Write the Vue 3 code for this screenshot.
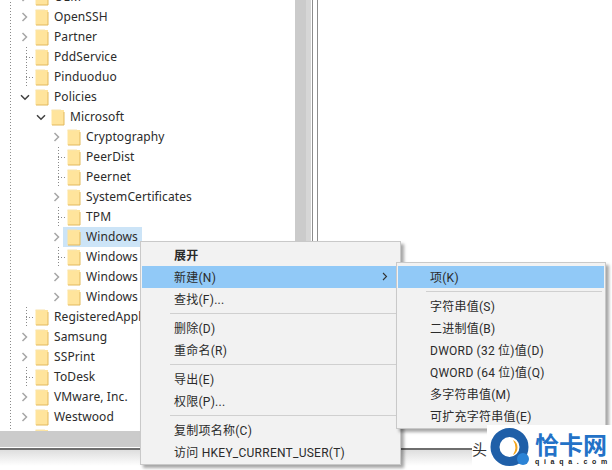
<script setup>
const rows = [
  { id: 0, name: 'OEM', level: 0, mark: 'closed' },
  { id: 1, name: 'OpenSSH', level: 0, mark: 'closed' },
  { id: 2, name: 'Partner', level: 0, mark: 'closed' },
  { id: 3, name: 'PddService', level: 0, mark: 'none' },
  { id: 4, name: 'Pinduoduo', level: 0, mark: 'none' },
  { id: 5, name: 'Policies', level: 0, mark: 'open' },
  { id: 6, name: 'Microsoft', level: 1, mark: 'open' },
  { id: 7, name: 'Cryptography', level: 2, mark: 'closed' },
  { id: 8, name: 'PeerDist', level: 2, mark: 'none' },
  { id: 9, name: 'Peernet', level: 2, mark: 'none' },
  { id: 10, name: 'SystemCertificates', level: 2, mark: 'closed' },
  { id: 11, name: 'TPM', level: 2, mark: 'none' },
  { id: 12, name: 'Windows', level: 2, mark: 'closed', selected: true },
  { id: 13, name: 'Windows Defender', level: 2, mark: 'none' },
  { id: 14, name: 'Windows NT', level: 2, mark: 'closed' },
  { id: 15, name: 'Windows Search', level: 2, mark: 'closed' },
  { id: 16, name: 'RegisteredApplications', level: 0, mark: 'none' },
  { id: 17, name: 'Samsung', level: 0, mark: 'closed' },
  { id: 18, name: 'SSPrint', level: 0, mark: 'closed' },
  { id: 19, name: 'ToDesk', level: 0, mark: 'none' },
  { id: 20, name: 'VMware, Inc.', level: 0, mark: 'closed' },
  { id: 21, name: 'Westwood', level: 0, mark: 'closed' },
  { id: 22, name: '', level: 0, mark: 'closed' }
]
const mainMenu = [
  [{ t: '展开', bold: true }, { t: '新建(N)', active: true, arrow: true }, { t: '查找(F)...' }],
  [{ t: '删除(D)' }, { t: '重命名(R)' }],
  [{ t: '导出(E)' }, { t: '权限(P)...' }],
  [{ t: '复制项名称(C)' }, { t: '访问 HKEY_CURRENT_USER(T)' }]
]
const subMenu = [
  [{ t: '项(K)', active: true }],
  [{ t: '字符串值(S)' }, { t: '二进制值(B)' }, { t: 'DWORD (32 位)值(D)' }, { t: 'QWORD (64 位)值(Q)' }, { t: '多字符串值(M)' }, { t: '可扩充字符串值(E)' }]
]
</script>

<template>
  <div class="screen">
    <div class="panes">
      <div class="tree">
        <div class="tree-list">
          <div v-for="r in rows" :key="r.id" class="row" :class="'lv' + r.level">
            <span class="mark" :class="r.mark">
              <svg v-if="r.mark === 'closed' && r.name" class="chev" width="7" height="10" viewBox="0 0 7 10"><path d="M1.5 1 L5.5 5 L1.5 9" fill="none" stroke="#a6a6a6" stroke-width="1.5"/></svg>
              <svg v-else-if="r.mark === 'open'" class="chev" width="10" height="7" viewBox="0 0 10 7"><path d="M1 1.2 L5 5.2 L9 1.2" fill="none" stroke="#404040" stroke-width="1.5"/></svg>
              <span v-else-if="r.mark === 'none'" class="stub"></span>
            </span>
            <span class="entry" :class="{ selected: r.selected }">
              <svg class="folder" width="14" height="17" viewBox="0 0 14 17">
                <path d="M0.5 1 H13 V16 H0.5 Z" fill="#ffe49c"/>
                <path d="M13 3 V16 H1" fill="none" stroke="#e2b95c" stroke-width="1"/>
                <path d="M0.5 1 H10" stroke="#f7e3ae" stroke-width="1"/>
              </svg>
              <span class="label">{{ r.name }}</span>
            </span>
          </div>
        </div>
        <div class="vscroll"></div>
      </div>
      <div class="gap"></div>
      <div class="splitter"></div>
      <div class="values"></div>
    </div>
    <div class="hscroll"></div>
    <div class="status"></div>
    <span class="status-text">头条</span>

    <div class="menu main-menu">
      <template v-for="(group, i) in mainMenu" :key="i">
        <div v-if="i" class="sep"></div>
        <div v-for="it in group" :key="it.t" class="item" :class="{ active: it.active, bold: it.bold }">
          <span>{{ it.t }}</span>
          <svg v-if="it.arrow" class="arrow" width="6" height="9" viewBox="0 0 6 9"><path d="M1 1 L4.5 4.5 L1 8" fill="none" stroke="#333" stroke-width="1.1"/></svg>
        </div>
      </template>
    </div>

    <div class="menu sub-menu">
      <template v-for="(group, i) in subMenu" :key="i">
        <div v-if="i" class="sep"></div>
        <div v-for="it in group" :key="it.t" class="item" :class="{ active: it.active }">
          <span>{{ it.t }}</span>
        </div>
      </template>
    </div>

    <div class="logo">
      <svg class="logo-mark" width="48" height="45" viewBox="0 0 48 45">
        <circle cx="22.5" cy="22" r="14.5" fill="none" stroke="#1f5fa8" stroke-width="9"/>
        <path d="M26 15 A8.5 8.5 0 0 1 26 30 A14 14 0 0 0 26 15 Z" fill="#f3a51d"/>
        <circle cx="36" cy="34" r="6" fill="#2b83d6"/>
      </svg>
      <div class="logo-text">
        <div class="logo-cn">恰卡网</div>
        <div class="logo-en">qiaqa.com</div>
      </div>
    </div>
  </div>
</template>

<style>
html, body { margin: 0; padding: 0; background: #fff; overflow: hidden; }
</style>

<style scoped>
.screen {
  position: relative;
  width: 612px;
  height: 470px;
  overflow: hidden;
  background: #fff;
  font-family: "Roboto", "Noto Sans CJK SC", sans-serif;
  font-size: 12px;
  color: #2b2b2b;
  display: flex;
  flex-direction: column;
}
.panes { display: flex; height: 444px; margin-top: -13px; flex-shrink: 0; }
.tree { width: 311px; display: flex; flex-shrink: 0; overflow: hidden; }
.tree-list {
  width: 295px;
  padding-left: 12px;
  box-sizing: border-box;
  flex-shrink: 0;
  font-family: "Noto Sans", "Noto Sans CJK SC", sans-serif;
  font-size: 12px;
  letter-spacing: 0.1px;
  background-image: repeating-linear-gradient(#8a8a8a 0 1px, transparent 1px 3px);
  background-size: 1px 100%;
  background-repeat: no-repeat;
  background-position: 10px 0;
}
.row { height: 20px; display: flex; align-items: center; white-space: nowrap; flex-shrink: 0; }
.lv1 { padding-left: 16px; }
.lv2 { padding-left: 32px; }
.mark { width: 23px; height: 20px; display: flex; align-items: center; justify-content: center; flex-shrink: 0; background-repeat: no-repeat; }
.mark.none {
  background-image: repeating-linear-gradient(#8a8a8a 0 1px, transparent 1px 3px);
  background-size: 1px 100%;
  background-position: 14px 0;
}
.chev { margin-left: 2px; }
.stub { width: 8px; height: 1px; margin-left: auto; margin-right: 1px; background-image: repeating-linear-gradient(90deg, #8a8a8a 0 1px, transparent 1px 3px); }
.entry { display: flex; align-items: center; height: 20px; }
.entry.selected { background: #cce4f7; padding: 0 4px; margin-left: -4px; }
.folder { margin-right: 5px; flex-shrink: 0; }
.label { margin-bottom: 2px; }
.vscroll { width: 16px; background: linear-gradient(90deg, #cbcbcb 0 11px, #d6d6d6 11px); }
.gap { width: 1px; flex-shrink: 0; }
.splitter { width: 4px; flex-shrink: 0; border-left: 1px solid #8c8c8c; border-right: 1px solid #8c8c8c; }
.values { flex: 1; }
.hscroll { height: 16px; flex-shrink: 0; background: #cbcbcb; width: 311px; }
.status {
  flex: 1;
  margin-top: 1px;
  width: 472px;
  border-top: 2px solid #6e6e6e;
  background: linear-gradient(#dedede, #fff 16px);
  box-sizing: border-box;
}
.status-text { position: absolute; left: 472px; top: 438px; color: #333; font-size: 15px; font-family: "Noto Sans CJK SC", sans-serif; }
.menu {
  position: absolute;
  background: #f2f2f2;
  border: 1px solid #c9c9c9;
  box-shadow: 3px 3px 3px rgba(0,0,0,0.35);
  box-sizing: border-box;
}
.main-menu { left: 140px; top: 241px; width: 261px; height: 224px; padding: 2px 0; }
.sub-menu { left: 396px; top: 262px; width: 210px; height: 167px; padding: 3px 0; }
.item { height: 22px; box-sizing: border-box; padding: 0 0 2px 32px; display: flex; align-items: center; position: relative; margin: 0 1px; white-space: nowrap; letter-spacing: 0.25px; }
.active { background: #91c9f7; }
.bold { font-weight: 700; }
.arrow { position: absolute; right: 11px; top: 6px; }
.sep { height: 1px; background: #d0d0d0; margin: 3px 3px 3px 29px; }
.logo {
  position: absolute;
  left: 487px;
  top: 425px;
  width: 125px;
  height: 45px;
  background: #fff;
  display: flex;
  align-items: flex-start;
}
.logo-mark { flex-shrink: 0; }
.logo-text { white-space: nowrap; }
.logo-cn { font-family: "Noto Sans CJK SC", sans-serif; font-weight: 700; font-size: 24px; line-height: 24px; margin-top: 7px; color: #2372c7; }
.logo-en { font-family: "Liberation Sans", sans-serif; font-size: 7px; line-height: 8px; margin-top: 2px; font-weight: 700; letter-spacing: 4.7px; color: #222; }
</style>
